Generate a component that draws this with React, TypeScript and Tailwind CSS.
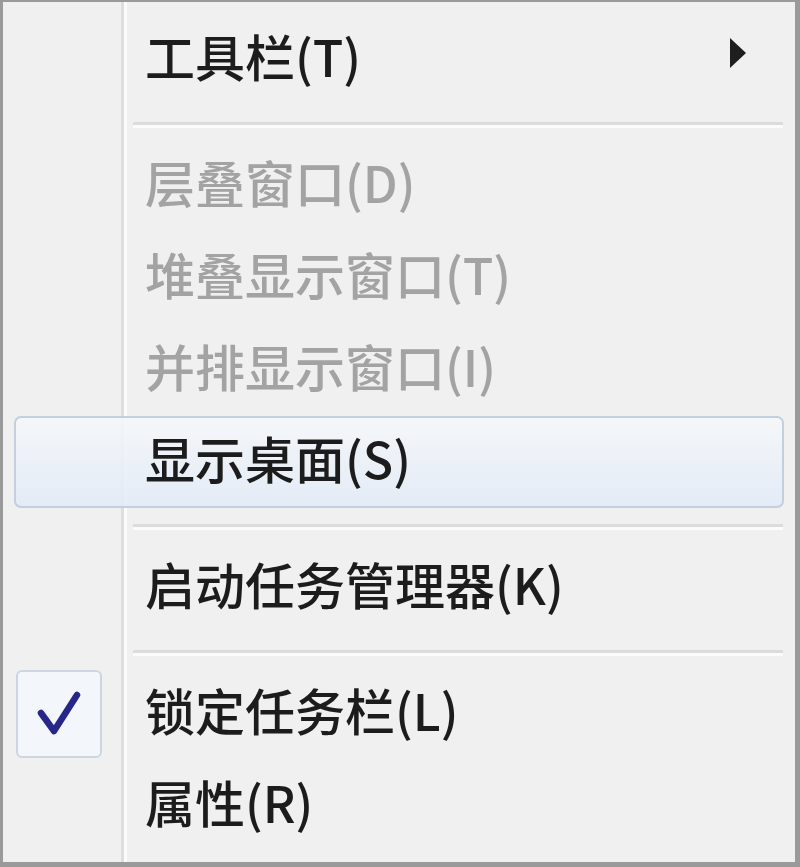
import React from "react";

type Item = { label: string; disabled?: boolean; checked?: boolean; highlighted?: boolean; submenu?: boolean };

const font = { fontFamily: '"Noto Sans CJK SC", "Noto Sans", sans-serif' };

function Row({ item }: { item: Item }) {
  return (
    <div
      className={
        "relative mx-[11px] flex h-[92px] items-center rounded-[7px] border-2 " +
        (item.highlighted
          ? "border-[#c3cfdd] bg-gradient-to-b from-[#f5f7fa]/90 to-[#e2ebf7]/90"
          : "border-transparent")
      }
    >
      <div className="flex h-[88px] w-[86px] shrink-0 items-center justify-center">
        {item.checked && (
          <div className="flex h-[88px] w-[86px] items-center justify-center rounded-[6px] border-2 border-[#cdd5e2] bg-[#f3f6fa]">
            <svg width="44" height="46" viewBox="0 0 44 46">
              <path d="M4 22 L17 40 L40 4" fill="none" stroke="#27278a" strokeWidth="6.5" strokeLinejoin="round" strokeLinecap="round" />
            </svg>
          </div>
        )}
      </div>
      <div
        className={
          "mb-[10px] ml-[43px] whitespace-nowrap text-[50px] leading-none font-medium " +
          (item.disabled ? "text-[#a3a3a3]" : "text-[#1c1c1c]")
        }
        style={font}
      >
        {item.label}
      </div>
      {item.submenu && (
        <svg className="absolute right-[34px] top-[20px]" width="20" height="34" viewBox="0 0 20 34">
          <path d="M2 2 L18 17 L2 32 Z" fill="#1e1e1e" />
        </svg>
      )}
    </div>
  );
}

function Separator() {
  return (
    <div className="ml-[130px] mr-[12px] mt-[16px] mb-[12px] flex flex-col">
      <div className="h-[3px] bg-[#dcdcdc]" />
      <div className="h-[3px] bg-[#fbfbfb]" />
    </div>
  );
}

export default function App() {
  return (
    <div className="h-[867px] w-[800px] bg-white">
      <div className="relative box-border h-[867px] w-[800px] border-l-[3px] border-t-2 border-r-[5px] border-b-[5px] border-[#9a9a9a] bg-[#f0f0f0] pt-[12px]">
        <div className="absolute bottom-0 left-[118px] top-0 flex">
          <div className="w-[3px] bg-[#dedede]" />
          <div className="w-[3px] bg-[#fbfbfb]" />
        </div>
        <div className="relative flex flex-col">
          <Row item={{ label: "工具栏(T)", submenu: true }} />
          <Separator />
          <Row item={{ label: "层叠窗口(D)", disabled: true }} />
          <Row item={{ label: "堆叠显示窗口(T)", disabled: true }} />
          <Row item={{ label: "并排显示窗口(I)", disabled: true }} />
          <Row item={{ label: "显示桌面(S)", highlighted: true }} />
          <Separator />
          <Row item={{ label: "启动任务管理器(K)" }} />
          <Separator />
          <Row item={{ label: "锁定任务栏(L)", checked: true }} />
          <Row item={{ label: "属性(R)" }} />
        </div>
      </div>
    </div>
  );
}
